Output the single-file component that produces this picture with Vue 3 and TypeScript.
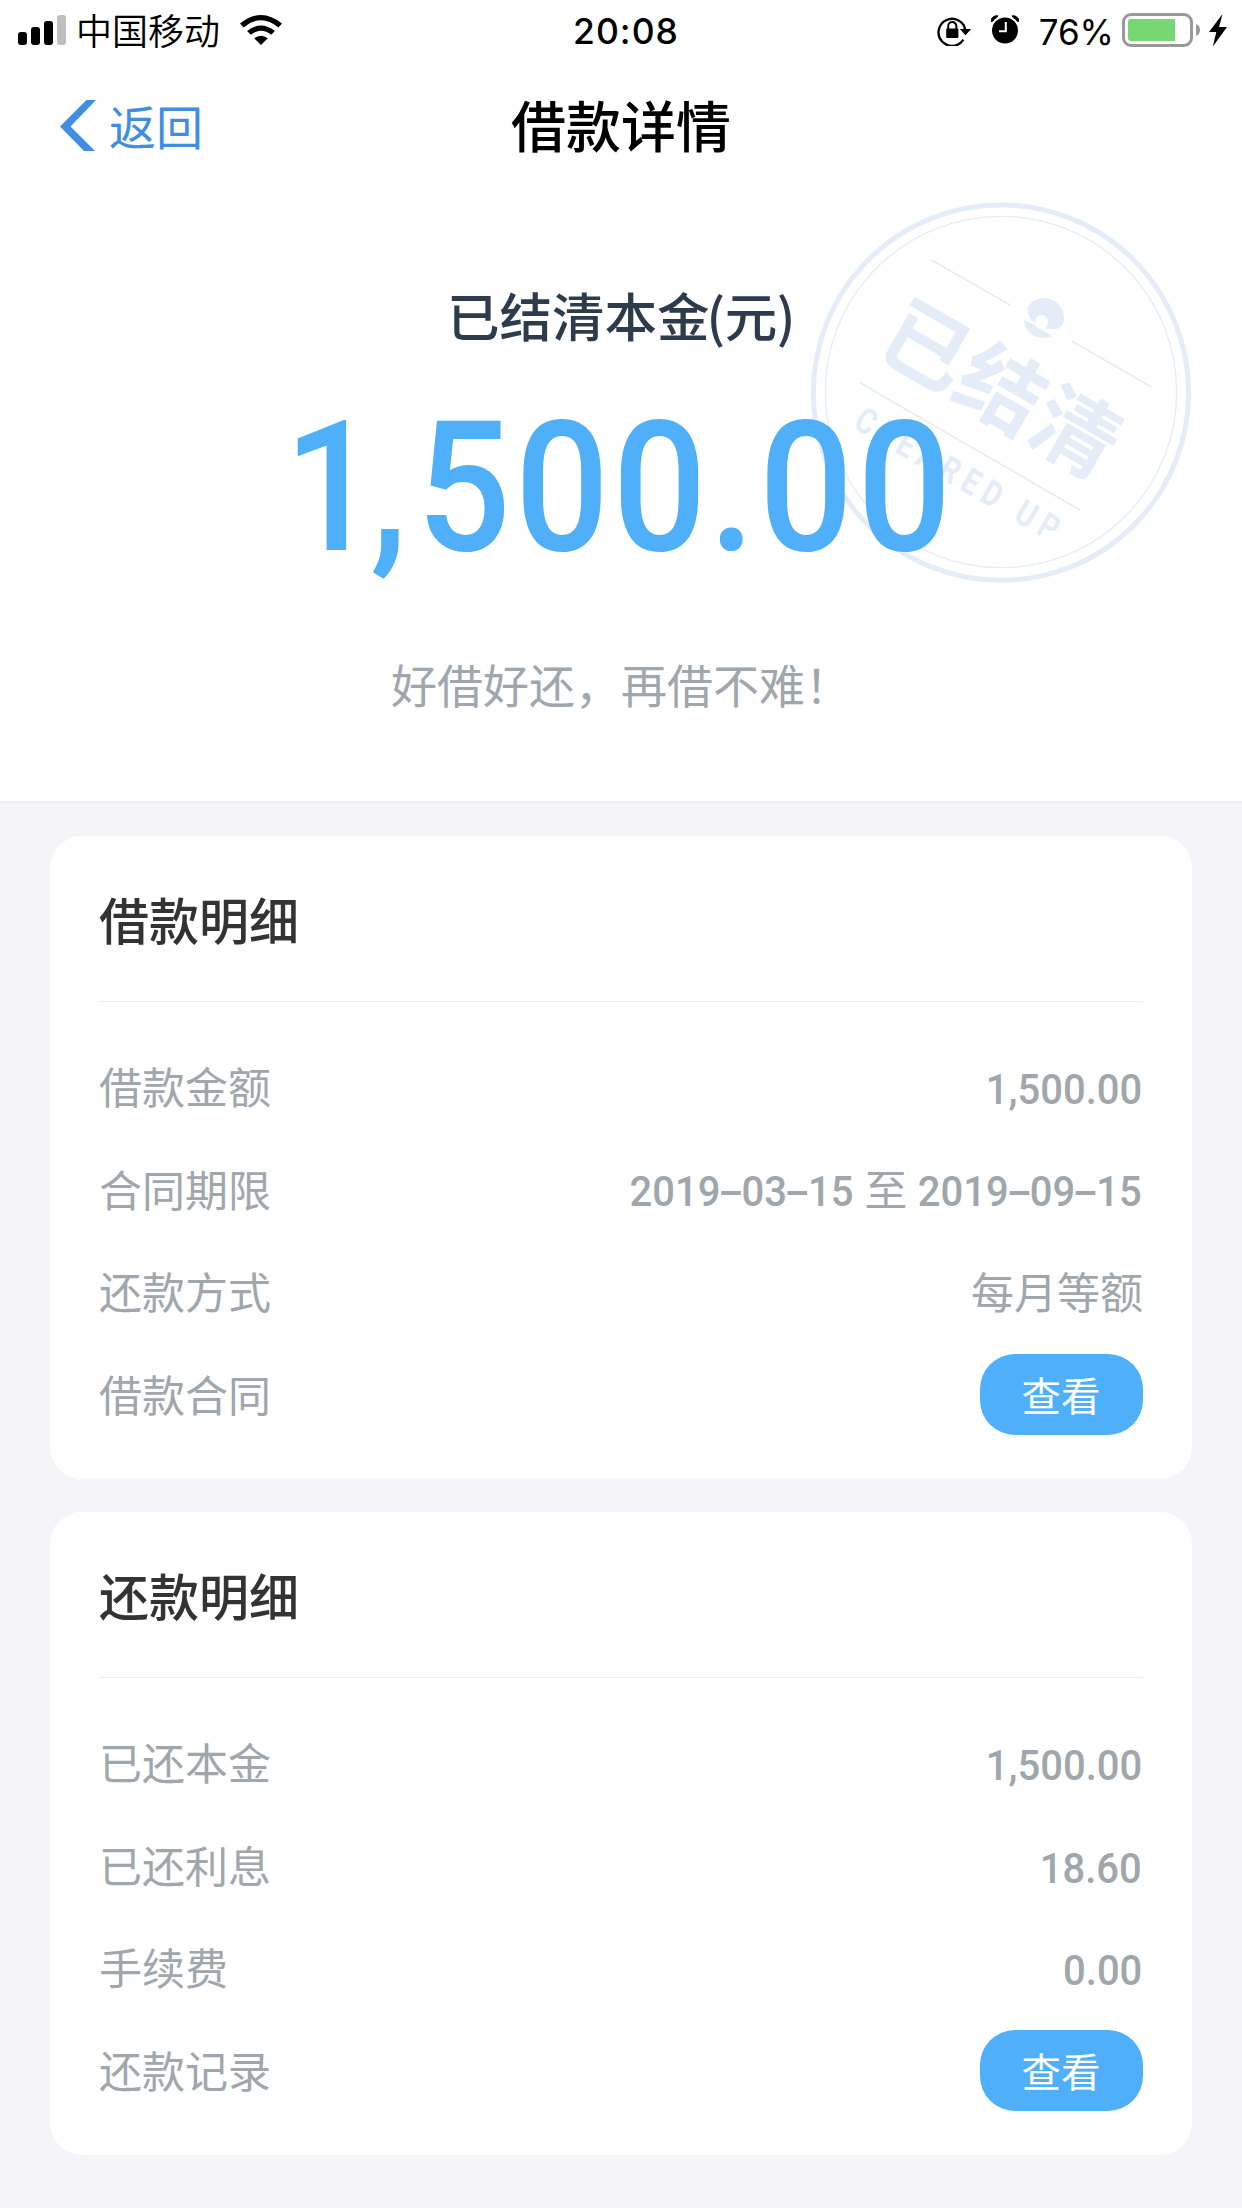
<script setup lang="ts">
interface Row {
  label: string
  value?: string
  range?: [string, string]
  text?: string
  action?: string
}

interface Card {
  title: string
  rows: Row[]
}

const signalBars: number[] = [13, 18, 24, 30]

const cards: Card[] = [
  {
    title: '借款明细',
    rows: [
      { label: '借款金额', value: '1,500.00' },
      { label: '合同期限', range: ['2019-03-15', '2019-09-15'] },
      { label: '还款方式', text: '每月等额' },
      { label: '借款合同', action: '查看' },
    ],
  },
  {
    title: '还款明细',
    rows: [
      { label: '已还本金', value: '1,500.00' },
      { label: '已还利息', value: '18.60' },
      { label: '手续费', value: '0.00' },
      { label: '还款记录', action: '查看' },
    ],
  },
]

const dateParts = (date: string): string[] => date.split(/(-)/)
</script>

<template>
  <div class="page">
    <section class="hero">
      <div class="status">
        <div class="status-left">
          <div class="signal">
            <i v-for="(h, i) in signalBars" :key="h" :class="{ weak: i === 3 }" :style="{ height: h + 'px' }"></i>
          </div>
          <span class="carrier">中国移动</span>
          <svg class="wifi" width="42" height="30" viewBox="0 0 42 30">
            <path d="M0 8.6Q21 -8.6 42 8.6L38.4 12.4Q21 -2 3.6 12.4Z" />
            <path d="M7.1 16Q21 5 34.900 16L31.200 19.800Q21 11.600 10.800 19.800Z" />
            <path d="M14.200 23.300Q21 18.300 27.800 23.300L21 30Z" />
          </svg>
        </div>
        <span class="time">20:08</span>
        <div class="status-right">
          <svg class="rotation" width="35" height="31" viewBox="0 0 35 31">
            <path d="M26.400 24.600A13.500 13.500 0 1 1 28.300 15" fill="none" stroke="#000" stroke-width="2.300" />
            <path d="M22.800 14H34.200L28.500 20.300Z" />
            <rect x="9.200" y="13.500" width="12.200" height="9.500" rx="1" />
            <path d="M11.200 14V11.200a4.100 4.100 0 0 1 8.200 0V14" fill="none" stroke="#000" stroke-width="2" />
          </svg>
          <svg class="alarm" width="28" height="29" viewBox="0 0 28 29">
            <circle cx="14" cy="15.500" r="13" />
            <path d="M0 6.500A5.800 5.800 0 0 1 6.800 .8L6 2.300Q3.300 3.600 1.700 6.300ZM28 6.500A5.800 5.800 0 0 0 21.200 .8L22 2.300Q24.700 3.600 26.300 6.300Z" stroke="#000" stroke-width="1" />
            <path d="M14.800 7V16.300H8" fill="none" stroke="#fff" stroke-width="2" />
          </svg>
          <span class="percent">76%</span>
          <svg class="battery" width="79" height="34" viewBox="0 0 79 34">
            <rect x="1.500" y="1.500" width="68" height="31" rx="7.500" fill="none" stroke="#999" stroke-width="3" />
            <path d="M9 6H53V28H9Q6 28 6 25V9Q6 6 9 6Z" fill="#76d672" />
            <path d="M74 11Q78 12.500 78 17T74 23Z" fill="#999" />
          </svg>
          <svg class="bolt" width="18" height="33" viewBox="0 0 18 33">
            <path d="M13.500 0L0 18H7.300L3.800 32.500L18 13H10Z" />
          </svg>
        </div>
      </div>

      <header class="nav">
        <a class="back">
          <svg width="37" height="51" viewBox="0 0 37 51">
            <path d="M26.500 0L0 26.500L24 51H35L10.500 26.500L36 0Z" />
          </svg>
          <span>返回</span>
        </a>
        <h1>借款详情</h1>
      </header>

      <svg class="stamp" width="420" height="420" viewBox="0 0 1260 1260">
        <g fill="none" stroke="#e4edf7">
          <circle cx="633" cy="638" r="563" stroke-width="15" />
          <circle cx="633" cy="636" r="527" stroke-width="4" />
          <path d="M424 240L661 376M846 484L1084 621M210 608L870 990" stroke-width="5" />
        </g>
        <g fill="#e4edf7">
          <path d="M713 391C711 373 735 354 762 354C797 354 823 385 822 416C821 437 809 448 790 447L764 446C771 441 774 433 774 425C774 414 766 405 755 405C744 405 736 414 736 428V430C724 422 713 403 713 391Z" />
          <path d="M702 420L736 436C740 442 746 446 753 447L787 469C750 485 703 463 702 420Z" />
          <text class="stamp-cn" transform="translate(633 628) rotate(30)" text-anchor="middle" y="93">已结清</text>
          <text class="stamp-en" transform="translate(186 742) rotate(30) scale(.8 1)" textLength="860" lengthAdjust="spacing">CLEARED UP</text>
        </g>
      </svg>

      <p class="caption">已结清本金<span class="unit">(元)</span></p>
      <svg class="amount" width="1242" height="240" viewBox="0 0 1242 240">
        <text y="175" transform="scale(.91 1)" x="312 407 458 566 673 779 834 942">1,500.00</text>
      </svg>
      <p class="slogan">好借好还，再借不难！</p>
    </section>

    <main class="cards">
      <section v-for="card in cards" :key="card.title" class="card">
        <h2>{{ card.title }}</h2>
        <div v-for="row in card.rows" :key="row.label" class="row">
          <span class="label">{{ row.label }}</span>
          <span v-if="row.value" class="number">{{ row.value }}</span>
          <span v-else-if="row.range" class="number range">
            <template v-for="(date, i) in row.range" :key="date"><span v-if="i" class="to">至</span><span v-for="(part, j) in dateParts(date)" :key="j" :class="{ dash: part === '-' }">{{ part }}</span></template>
          </span>
          <span v-else-if="row.text" class="label">{{ row.text }}</span>
          <button v-else class="view">{{ row.action }}</button>
        </div>
      </section>
    </main>
  </div>
</template>

<style>
body {
  margin: 0;
  background: #f4f4f9;
}
</style>

<style scoped>
.page {
  width: 1242px;
  height: 2208px;
  overflow: hidden;
  background: #f4f4f9;
  font-family: "Noto Sans CJK SC", sans-serif;
}
.hero {
  position: relative;
  height: 801px;
  background: #fff;
  border-bottom: 2px solid #f0f0f2;
}
.status {
  display: grid;
  grid-template-columns: 1fr auto 1fr;
  height: 60px;
  padding: 0 15px 0 18px;
}
.status-left,
.status-right {
  display: flex;
  align-items: flex-start;
}
.status-right {
  justify-content: flex-end;
}
.signal {
  display: flex;
  align-items: flex-end;
  gap: 4px;
  height: 45px;
}
.signal i {
  width: 9px;
  border-radius: 3px;
  background: #000;
}
.signal .weak {
  background: #bfbfbf;
}
.carrier {
  margin-left: 10px;
  font-size: 36px;
  line-height: 59px;
  font-weight: 350;
}
.wifi {
  margin: 15px 0 0 20px;
}
.time {
  padding-left: 7px;
  font: 500 35.500px/63px Inter, sans-serif;
  letter-spacing: 1px;
}
.rotation {
  margin-top: 15px;
}
.alarm {
  margin: 15px 0 0 19px;
}
.percent {
  margin: 0 0 0 20px;
  font: 400 35px/64px Inter, sans-serif;
}
.battery {
  margin: 13px 0 0 8px;
}
.bolt {
  margin: 14px 0 0 8px;
}
.nav {
  display: grid;
  grid-template-columns: 1fr auto 1fr;
  height: 132px;
}
.back {
  display: flex;
  align-items: flex-start;
  padding-left: 60px;
  font-size: 47px;
  line-height: 130px;
  color: #408ee4;
}
.back svg {
  margin: 40px 12px 0 0;
  fill: #408ee4;
}
h1 {
  margin: 0;
  font-size: 55px;
  line-height: 126px;
  font-weight: 500;
}
.stamp {
  position: absolute;
  left: 790px;
  top: 180px;
}
.stamp-cn {
  font: 700 258px "Noto Sans CJK SC", sans-serif;
}
.stamp-en {
  font: 700 107px Roboto, sans-serif;
}
.caption {
  margin: 82px 0 0;
  text-align: center;
  font-size: 52.500px;
  line-height: 80px;
  font-weight: 500;
  color: #2d3b4a;
}
.unit {
  margin-left: -3px;
  letter-spacing: -.5px;
}
.amount {
  position: relative;
  display: block;
  margin-top: 21px;
}
.amount text {
  font: 500 182px Roboto, sans-serif;
  fill: #50aff9;
}
.slogan {
  margin: 28px 0 0;
  text-align: center;
  font-size: 46px;
  line-height: 80px;
  color: #9fa6ac;
}
.cards {
  display: flex;
  flex-direction: column;
  gap: 33px;
  padding: 33px 50px 0;
}
.card {
  box-sizing: border-box;
  height: 643px;
  padding: 0 49px;
  border-radius: 32px;
  background: #fff;
}
h2 {
  box-sizing: border-box;
  height: 166px;
  margin: 0 0 33px;
  border-bottom: 1px solid #eee;
  font-size: 50px;
  line-height: 164px;
  font-weight: 500;
  color: #333;
}
.row {
  display: flex;
  align-items: center;
  justify-content: space-between;
  height: 102.700px;
}
.label {
  padding-bottom: 3px;
  font-size: 43px;
  line-height: 60px;
  color: #9fa6ac;
}
.number {
  padding: 5px 1px 0 0;
  font: 500 43px/60px Roboto, sans-serif;
  color: #9fa6ac;
  white-space: nowrap;
  transform: scaleX(.93);
  transform-origin: right center;
}
.range {
  padding-top: 0;
}
.dash {
  display: inline-block;
  margin: 0 4px;
  transform: scaleX(1.900);
}
.to {
  display: inline-block;
  margin: 0 13px;
  font: 400 43px/60px "Noto Sans CJK SC", sans-serif;
  transform: scaleX(1.070);
}
.view {
  width: 163px;
  height: 81px;
  padding: 0 1px 2px 0;
  border: 0;
  border-radius: 35px;
  background: #50aff9;
  color: #fff;
  font: 400 39.500px/79px "Noto Sans CJK SC", sans-serif;
}
</style>
